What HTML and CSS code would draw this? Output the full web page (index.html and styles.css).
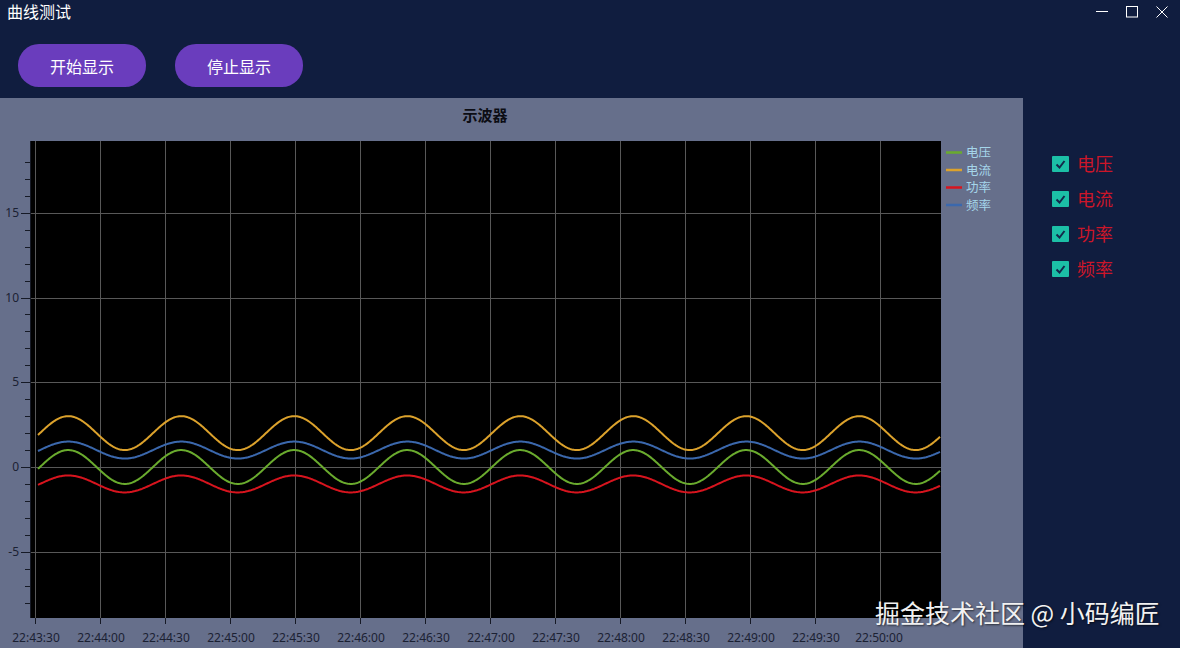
FILE: index.html
```html
<!DOCTYPE html>
<html lang="zh-CN">
<head>
<meta charset="utf-8">
<title>曲线测试</title>
<link rel="stylesheet" href="styles.css">
</head>
<body>
<header class="titlebar">
  <span class="title">曲线测试</span>
  <div class="win-controls">
    <span class="wc"><svg viewBox="0 0 12 12"><path d="M0 5.5H12"/></svg></span>
    <span class="wc"><svg viewBox="0 0 12 12"><rect x="0.5" y="0.5" width="11" height="10.5"/></svg></span>
    <span class="wc"><svg viewBox="0 0 12 12"><path d="M0.5 0.5L11.5 11.5M11.5 0.5L0.5 11.5"/></svg></span>
  </div>
</header>
<div class="toolbar">
  <button class="btn">开始显示</button>
  <button class="btn">停止显示</button>
</div>
<main class="content">
  <section class="chart-panel">
    <svg id="chart" class="chart" width="1023" height="550" viewBox="0 98 1023 550">
      <text class="c-title" x="485" y="121" text-anchor="middle">示波器</text>
      <rect class="plot" x="30" y="141" width="911" height="477"/>
      <g id="grid"></g>
      <g id="curves"></g>
      <g id="axes"></g>
      <g class="ylabels" text-anchor="end">
        <text x="19" y="217">15</text>
        <text x="19" y="302">10</text>
        <text x="19" y="386">5</text>
        <text x="19" y="471">0</text>
        <text x="19" y="556">-5</text>
      </g>
      <g class="xlabels" text-anchor="middle">
        <text x="36" y="642">22:43:30</text>
        <text x="101" y="642">22:44:00</text>
        <text x="166" y="642">22:44:30</text>
        <text x="231" y="642">22:45:00</text>
        <text x="296" y="642">22:45:30</text>
        <text x="361" y="642">22:46:00</text>
        <text x="426" y="642">22:46:30</text>
        <text x="491" y="642">22:47:00</text>
        <text x="556" y="642">22:47:30</text>
        <text x="621" y="642">22:48:00</text>
        <text x="686" y="642">22:48:30</text>
        <text x="751" y="642">22:49:00</text>
        <text x="816" y="642">22:49:30</text>
        <text x="879" y="642">22:50:00</text>
      </g>
      <g class="legend">
        <line x1="946" y1="152.5" x2="962" y2="152.5" stroke="#6aab2e"/>
        <text x="966" y="157">电压</text>
        <line x1="946" y1="170" x2="962" y2="170" stroke="#dca22c"/>
        <text x="966" y="174.5">电流</text>
        <line x1="946" y1="187.5" x2="962" y2="187.5" stroke="#d8141e"/>
        <text x="966" y="192">功率</text>
        <line x1="946" y1="205" x2="962" y2="205" stroke="#3b68ad"/>
        <text x="966" y="209.5">频率</text>
      </g>
    </svg>
  </section>
  <aside class="series-panel">
    <label class="series"><span class="box"><svg viewBox="0 0 17 16"><path d="M4.5 8.5L7.5 11.5L12.5 5"/></svg></span><span class="name">电压</span></label>
    <label class="series"><span class="box"><svg viewBox="0 0 17 16"><path d="M4.5 8.5L7.5 11.5L12.5 5"/></svg></span><span class="name">电流</span></label>
    <label class="series"><span class="box"><svg viewBox="0 0 17 16"><path d="M4.5 8.5L7.5 11.5L12.5 5"/></svg></span><span class="name">功率</span></label>
    <label class="series"><span class="box"><svg viewBox="0 0 17 16"><path d="M4.5 8.5L7.5 11.5L12.5 5"/></svg></span><span class="name">频率</span></label>
  </aside>
</main>
<div class="watermark">掘金技术社区 @ 小码编匠</div>
<script src="script.js"></script>
</body>
</html>
```

FILE: styles.css
```css
* { box-sizing: border-box; margin: 0; padding: 0; }
html, body { width: 1180px; height: 648px; overflow: hidden; }
body {
  position: relative;
  background: #101d3f;
  color: #fff;
  font-family: "Noto Sans", "Noto Sans CJK SC", sans-serif;
}
.titlebar {
  height: 24px;
  display: flex;
  align-items: center;
  justify-content: space-between;
  padding: 0 3px 0 7px;
}
.title {
  font-family: "Noto Sans CJK SC", sans-serif;
  font-size: 16px;
  line-height: 1;
  margin-top: -3px;
}
.win-controls { display: flex; }
.wc {
  width: 30px;
  height: 24px;
  display: flex;
  align-items: center;
  justify-content: center;
}
.wc svg { width: 12px; height: 12px; fill: none; stroke: #fff; stroke-width: 1; }
.toolbar {
  display: flex;
  gap: 29px;
  padding: 20px 0 11px 18px;
}
.btn {
  width: 128px;
  height: 43px;
  border: none;
  border-radius: 21px;
  background: #6a3dbd;
  color: #fff;
  font-family: "Noto Sans CJK SC", sans-serif;
  font-size: 16px;
}
.content { display: flex; height: 550px; }
.chart-panel { width: 1023px; height: 550px; background: #666f8b; flex: none; }
.chart { display: block; font-family: "Noto Sans", "Noto Sans CJK SC", sans-serif; }
.c-title { font-family: "Noto Sans CJK SC", sans-serif; font-size: 15px; font-weight: bold; fill: #0c0d14; }
.plot { fill: #000; }
.grid-line { stroke: #585858; stroke-width: 1; }
.tick { stroke: #161a26; stroke-width: 1; }
.ylabels, .xlabels { font-size: 12px; fill: #1b2133; }
.legend { font-family: "Noto Sans CJK SC", sans-serif; font-size: 12.5px; fill: #a5d6ea; }
.legend line { stroke-width: 2.5; }
.curve { fill: none; stroke-width: 2; stroke-linejoin: round; }
.series-panel {
  display: flex;
  flex-direction: column;
  padding: 48px 0 0 29px;
}
.series {
  display: flex;
  align-items: center;
  gap: 8px;
  height: 35px;
}
.box {
  width: 17px;
  height: 16px;
  border-radius: 1px;
  background: #1cbfa6;
  display: flex;
}
.box svg { width: 17px; height: 16px; fill: none; stroke: #14284a; stroke-width: 2; }
.name {
  font-family: "Noto Sans CJK SC", sans-serif;
  font-size: 18px;
  color: #cc1629;
  line-height: 1;
  margin-top: -2px;
}
.watermark {
  position: absolute;
  left: 875px;
  top: 600px;
  font-family: "Noto Sans CJK SC", sans-serif;
  font-size: 25px;
  line-height: 1;
  color: #f2f2f2;
  white-space: nowrap;
  text-shadow: 1px 1px 2px rgba(0, 0, 0, 0.6);
}
```

FILE: script.js
```js
(function () {
  var NS = 'http://www.w3.org/2000/svg';
  var grid = document.getElementById('grid');
  var axes = document.getElementById('axes');
  var curves = document.getElementById('curves');
  var Y0 = 467, K = 16.95;
  function yOf(v) { return Y0 - v * K; }
  function line(parent, x1, y1, x2, y2, cls) {
    var l = document.createElementNS(NS, 'line');
    l.setAttribute('x1', x1); l.setAttribute('y1', y1);
    l.setAttribute('x2', x2); l.setAttribute('y2', y2);
    l.setAttribute('class', cls);
    parent.appendChild(l);
  }
  for (var k = 0; k < 14; k++) {
    var x = 35 + 65 * k + 0.5;
    line(grid, x, 141, x, 618, 'grid-line');
    line(axes, x, 618, x, 624, 'tick');
  }
  for (var v = -8; v <= 18; v++) {
    var y = Math.round(yOf(v)) + 0.5;
    if (v % 5 === 0) {
      line(grid, 30, y, 941, y, 'grid-line');
      line(axes, 21, y, 30, y, 'tick');
    } else {
      line(axes, 25, y, 30, y, 'tick');
    }
  }
  line(axes, 30.5, 141, 30.5, 618, 'tick');
  var series = [
    { off: -1, amp: 0.5, color: '#d8141e' },
    { off: 1, amp: 0.5, color: '#3b68ad' },
    { off: 2, amp: 1, color: '#dca22c' },
    { off: 0, amp: 1, color: '#6aab2e' }
  ];
  series.forEach(function (s) {
    var d = '';
    for (var px = 38; px <= 940; px += 1) {
      var val = s.off + s.amp * Math.sin(2 * Math.PI * (px - 40) / 113);
      d += (px === 38 ? 'M' : 'L') + px + ' ' + yOf(val).toFixed(2);
    }
    var p = document.createElementNS(NS, 'path');
    p.setAttribute('d', d);
    p.setAttribute('class', 'curve');
    p.setAttribute('stroke', s.color);
    curves.appendChild(p);
  });
})();
```
